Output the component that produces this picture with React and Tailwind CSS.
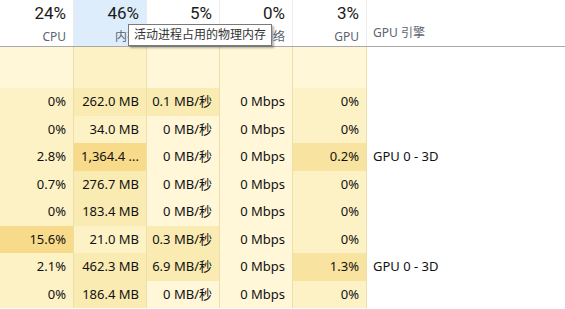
const font = { fontFamily: '"Noto Sans", "Noto Sans CJK SC", sans-serif' };

const L0 = 'bg-[#fff7d8]';
const L1 = 'bg-[#fdf2c6]';
const L2 = 'bg-[#faebb2]';
const L3 = 'bg-[#f8e3a0]';
const L4 = 'bg-[#f7da8a]';

const widths = ['w-[74px]', 'w-[73px]', 'w-[73px]', 'w-[73px]', 'w-[74px]'];

const headers = [
  { pct: '24%', label: 'CPU' },
  { pct: '46%', label: '内存', active: true },
  { pct: '5%', label: '磁盘' },
  { pct: '0%', label: '网络' },
  { pct: '3%', label: 'GPU' },
];

const rows = [
  { cells: [['0%', L1], ['262.0 MB', L2], ['0.1 MB/秒', L2], ['0 Mbps', L0], ['0%', L1]], engine: '' },
  { cells: [['0%', L1], ['34.0 MB', L1], ['0 MB/秒', L0], ['0 Mbps', L0], ['0%', L1]], engine: '' },
  { cells: [['2.8%', L1], ['1,364.4 ...', L4], ['0 MB/秒', L0], ['0 Mbps', L0], ['0.2%', L3]], engine: 'GPU 0 - 3D' },
  { cells: [['0.7%', L1], ['276.7 MB', L2], ['0 MB/秒', L0], ['0 Mbps', L0], ['0%', L1]], engine: '' },
  { cells: [['0%', L1], ['183.4 MB', L2], ['0 MB/秒', L0], ['0 Mbps', L0], ['0%', L1]], engine: '' },
  { cells: [['15.6%', L4], ['21.0 MB', L1], ['0.3 MB/秒', L2], ['0 Mbps', L0], ['0%', L1]], engine: '' },
  { cells: [['2.1%', L1], ['462.3 MB', L2], ['6.9 MB/秒', L2], ['0 Mbps', L0], ['1.3%', L3]], engine: 'GPU 0 - 3D' },
  { cells: [['0%', L1], ['186.4 MB', L2], ['0 MB/秒', L0], ['0 Mbps', L0], ['0%', L1]], engine: '' },
];

const emptyRow = [L0, L1, L0, L0, L0];

export default function App() {
  return (
    <div className="relative w-[565px] h-[309px] overflow-hidden bg-white text-[#111]" style={font}>
      {/* Header */}
      <div className="flex h-[46px]">
        {headers.map((h, i) => (
          <div
            key={i}
            className={`${widths[i]} shrink-0 flex flex-col items-end pr-[7px] border-r border-[#ececec] ${h.active ? 'bg-[#deedfb]' : 'bg-white'}`}
          >
            <div className="text-[17px] leading-none mt-[5px] text-[#1a1a1a]" style={{ fontFamily: 'Roboto, sans-serif' }}>{h.pct}</div>
            <div className="text-[12px] leading-none mt-[9px] text-[#5b6371]">{h.label}</div>
          </div>
        ))}
        <div className="flex-1 flex items-end pl-[6px] pb-[7px]">
          <span className="text-[12px] leading-none text-[#5b6371]">GPU 引擎</span>
        </div>
      </div>
      <div className="h-px bg-[#a9a9a9]" />

      {/* Empty top row */}
      <div className="flex h-[41px]">
        {emptyRow.map((bg, i) => (
          <div key={i} className={`${widths[i]} shrink-0 ${bg} border-r border-[#ecdfa8]`} />
        ))}
        <div className="flex-1" />
      </div>

      {/* Data rows */}
      {rows.map((r, ri) => (
        <div key={ri} className="flex h-[27.5px]">
          {r.cells.map(([text, bg], ci) => (
            <div
              key={ci}
              className={`${widths[ci]} shrink-0 ${bg} border-r border-[#ecdfa8] flex items-center justify-end pr-[7px] text-[13px] whitespace-nowrap`}
            >
              {text}
            </div>
          ))}
          <div className="flex-1 flex items-center pl-[6px] text-[13px] whitespace-nowrap">{r.engine}</div>
        </div>
      ))}

      {/* Tooltip */}
      <div className="absolute left-[128px] top-[24px] h-[22px] px-[5px] flex items-center bg-white border border-[#7a7a7a] shadow-[2px_2px_2px_rgba(0,0,0,0.3)] text-[12px] text-[#333] whitespace-nowrap">
        活动进程占用的物理内存
      </div>
    </div>
  );
}
